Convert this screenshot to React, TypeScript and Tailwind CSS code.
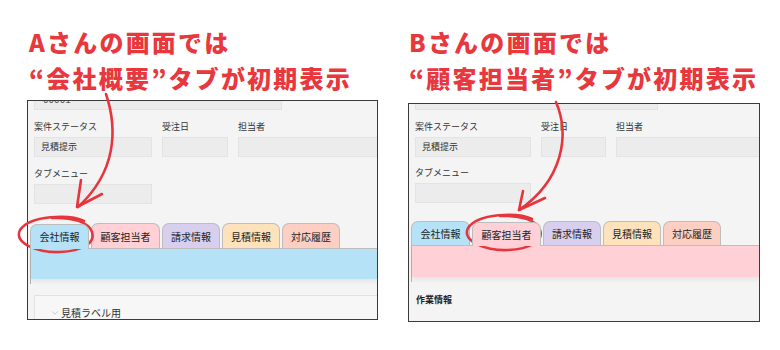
import { ChevronDown } from 'lucide-react';

type TabDef = { label: string; bg: string; w: string };

const tabs: TabDef[] = [
  { label: '会社情報', bg: 'bg-[#b6e2f8]', w: 'w-[59px]' },
  { label: '顧客担当者', bg: 'bg-[#ffd0d6]', w: 'w-[69px]' },
  { label: '請求情報', bg: 'bg-[#d8ceee]', w: 'w-[58px]' },
  { label: '見積情報', bg: 'bg-[#fde2bc]', w: 'w-[58px]' },
  { label: '対応履歴', bg: 'bg-[#fdcfc3]', w: 'w-[58px]' }
];

function Field({ label, value, w }: { label: string; value?: string; w: string }) {
  return (
    <div className={`${w} shrink-0`}>
      <div className="h-[14px] text-[9px] leading-[14px] text-[#333]">{label}</div>
      <div className="mt-[3px] flex h-[20px] items-center border border-[#e3e3e3] bg-[#ececec] pl-[6px] text-[9px] text-[#333]">
        {value}
      </div>
    </div>
  );
}

function TabBar({ active, tall }: { active: number; tall: boolean }) {
  return (
    <div className="flex items-end gap-[2px] pl-[2px]">
      {tabs.map((tab, i) => (
        <div
          key={tab.label}
          className={`${tab.w} ${tab.bg} ${tall ? 'h-[25px]' : 'h-[24px]'} flex items-center justify-center rounded-t-[7px] border border-b-0 border-[#bdbdbd] text-[10px] text-[#222] ${
            i === active ? 'relative z-10 -mb-px pb-px' : ''
          }`}
        >
          {tab.label}
        </div>
      ))}
    </div>
  );
}

function Panel({ variant }: { variant: 'a' | 'b' }) {
  const a = variant === 'a';
  const active = a ? 0 : 1;
  return (
    <div
      className={`${a ? 'mt-[4px] h-[220px] w-[351px]' : 'mt-[7px] h-[219px] w-[352px]'} overflow-hidden border border-[#3a3a3a] bg-[#f4f4f4]`}
    >
      <div className="pl-[6px]">
        {/* top field, mostly scrolled out of view */}
        <div
          className={`${a ? '-mt-[11px] w-[248px]' : '-mt-[14px] w-[243px]'} h-[20px] overflow-hidden border border-[#e3e3e3] bg-[#ececec] pl-[8px] text-[10px] leading-[12px] text-[#555]`}
        >
          <div className="mt-[2px]">00001</div>
        </div>
        <div className="mt-[10px] flex gap-[10px]">
          <Field label="案件ステータス" value="見積提示" w={a ? 'w-[118px]' : 'w-[116px]'} />
          <Field label="受注日" w={a ? 'w-[66px]' : 'w-[65px]'} />
          <Field label="担当者" w="w-[160px]" />
        </div>
        <div className={a ? 'mt-[10px]' : 'mt-[9px]'}>
          <Field label="タブメニュー" w={a ? 'w-[118px]' : 'w-[116px]'} />
        </div>
      </div>

      <div className={a ? 'mt-[19px]' : 'mt-[18px]'}>
        <TabBar active={active} tall={a} />
        <div className="ml-[2px] border-l border-[#b3b3b3] pb-[5px]">
          <div
            className={`${a ? 'h-[31px] bg-[#b6e2f8]' : 'h-[32px] bg-[#ffd0d6]'} border-t border-[#bdbdbd] shadow-[0_3px_4px_rgba(0,0,0,0.06)]`}
          />
        </div>
      </div>

      {a ? (
        <div className="ml-[6px] mt-[11px] h-[40px] border-l border-t border-[#e2e2e2] bg-[#f7f7f7] pl-[15px] pt-[10px]">
          <div className="flex items-center gap-[1px] text-[10px] leading-[14px] text-[#333]">
            <ChevronDown size={10} strokeWidth={1.2} className="text-[#9a9a9a]" />
            見積ラベル用
          </div>
        </div>
      ) : (
        <div className="mt-[11px] pl-[7px] text-[9px] font-bold leading-[14px] text-[#222]">作業情報</div>
      )}
    </div>
  );
}

function Column({ variant }: { variant: 'a' | 'b' }) {
  const a = variant === 'a';
  return (
    <div className="flex flex-col">
      <div className={`${a ? 'pl-[2px]' : 'pl-[1px]'} pt-[24px] text-[24px] font-black leading-[36px] tracking-[2.2px] text-[#e8383d]`}>
        <div>{a ? 'Aさんの画面では' : 'Bさんの画面では'}</div>
        <div>{a ? '“会社概要”タブが初期表示' : '“顧客担当者”タブが初期表示'}</div>
      </div>
      <Panel variant={variant} />
    </div>
  );
}

function Annotations() {
  return (
    <svg className="pointer-events-none absolute left-0 top-0" width="780" height="350" viewBox="0 0 780 350" fill="none">
      <g stroke="#e8343c" strokeWidth="2.6" strokeLinecap="round" strokeLinejoin="round">
        <path d="M106 94 C118 130 116 172 78 207" />
        <path d="M81 180 L77 207 L102 194" />
        <path d="M84 221 C70 214 30 215 20 230 C13 244 40 253 60 252 C82 251 96 243 92 232 C89 222 72 217 52 218" />

        <path d="M556 102 C570 135 563 180 519 210" />
        <path d="M523 191 L519 210 L545 198" />
        <path d="M532 219 C518 212 478 213 468 228 C461 242 488 251 508 250 C530 249 544 241 540 230 C537 220 520 215 500 216" />
      </g>
    </svg>
  );
}

export default function App() {
  return (
    <div className="relative h-[350px] w-[780px] overflow-hidden bg-white font-['Noto_Sans_CJK_JP','Noto_Sans',sans-serif]">
      <div className="flex gap-[30px] pl-[27px]">
        <Column variant="a" />
        <Column variant="b" />
      </div>
      <Annotations />
    </div>
  );
}
